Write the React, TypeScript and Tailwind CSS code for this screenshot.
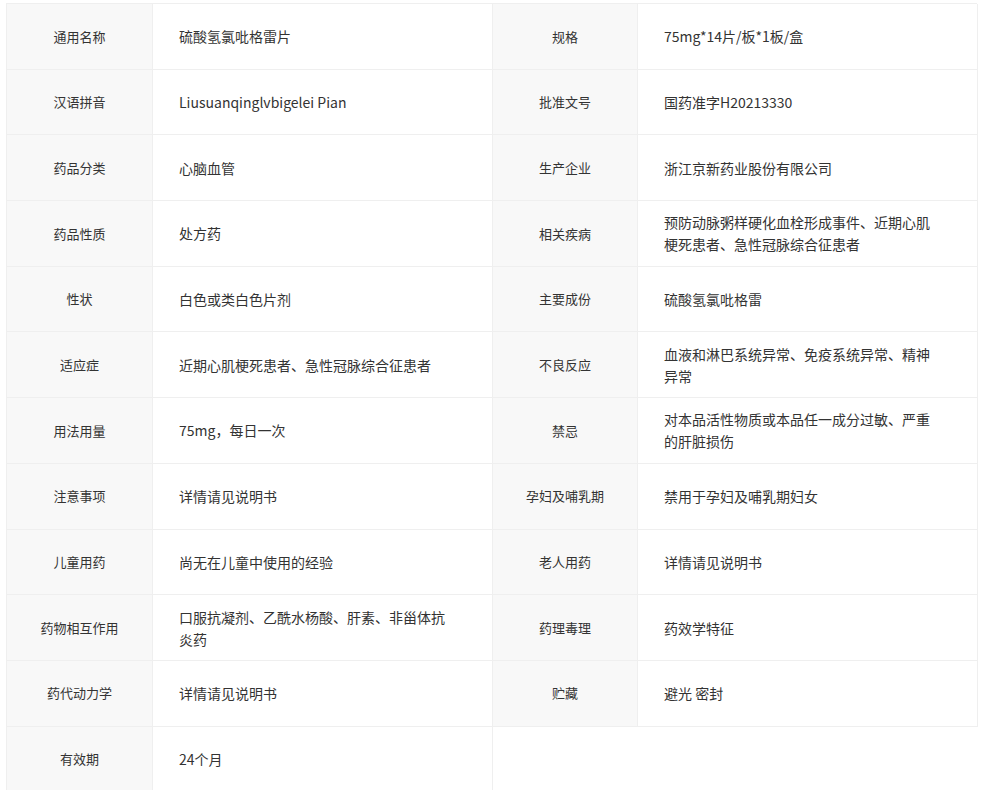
const rows: [string, string, string?, string?][] = [
  ["通用名称", "硫酸氢氯吡格雷片", "规格", "75mg*14片/板*1板/盒"],
  ["汉语拼音", "Liusuanqinglvbigelei Pian", "批准文号", "国药准字H20213330"],
  ["药品分类", "心脑血管", "生产企业", "浙江京新药业股份有限公司"],
  ["药品性质", "处方药", "相关疾病", "预防动脉粥样硬化血栓形成事件、近期心肌梗死患者、急性冠脉综合征患者"],
  ["性状", "白色或类白色片剂", "主要成份", "硫酸氢氯吡格雷"],
  ["适应症", "近期心肌梗死患者、急性冠脉综合征患者", "不良反应", "血液和淋巴系统异常、免疫系统异常、精神异常"],
  ["用法用量", "75mg，每日一次", "禁忌", "对本品活性物质或本品任一成分过敏、严重的肝脏损伤"],
  ["注意事项", "详情请见说明书", "孕妇及哺乳期", "禁用于孕妇及哺乳期妇女"],
  ["儿童用药", "尚无在儿童中使用的经验", "老人用药", "详情请见说明书"],
  ["药物相互作用", "口服抗凝剂、乙酰水杨酸、肝素、非甾体抗炎药", "药理毒理", "药效学特征"],
  ["药代动力学", "详情请见说明书", "贮藏", "避光 密封"],
  ["有效期", "24个月"],
];

function Label({ text }: { text: string }) {
  return (
    <div className="flex h-[65.7px] items-center justify-center border-r border-b border-[#efefef] bg-[#f8f8f8] text-[13px] text-[#333]">
      {text}
    </div>
  );
}

function Value({ text }: { text: string }) {
  return (
    <div className="flex h-[65.7px] items-center border-r border-b border-[#efefef] pl-[26px] pr-[34px] text-[14px] leading-[22px] text-[#333]">
      <span>{text}</span>
    </div>
  );
}

export default function App() {
  return (
    <div
      className="h-[790px] w-[984px] overflow-hidden bg-white pt-[3px] pl-[6px]"
      style={{ fontFamily: '"Noto Sans CJK SC", "Noto Sans", sans-serif' }}
    >
      <div className="grid w-[971px] grid-cols-[146px_340px_145px_340px] border-t border-l border-[#efefef]">
        {rows.map((r, i) => (
          <div key={i} className="contents">
            <Label text={r[0]} />
            <Value text={r[1]} />
            {r[2] !== undefined ? (
              <>
                <Label text={r[2]} />
                <Value text={r[3] ?? ""} />
              </>
            ) : (
              <div className="col-span-2" />
            )}
          </div>
        ))}
      </div>
    </div>
  );
}
